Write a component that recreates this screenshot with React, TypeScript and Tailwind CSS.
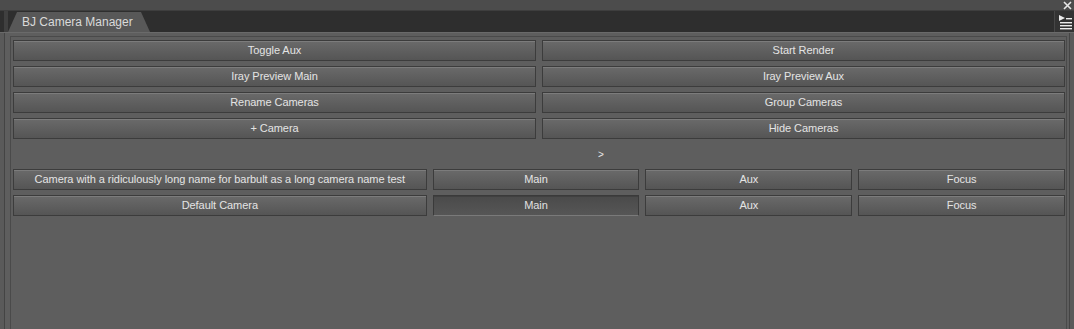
import React from "react";

const font = { fontFamily: '"Liberation Sans", Arial, sans-serif' };

function Btn({ label, pressed = false }: { label: string; pressed?: boolean }) {
  return (
    <div
      className={
        pressed
          ? "flex h-[21px] items-center justify-center border border-[#3a3a3a] border-b-[#7a7a7a] bg-gradient-to-b from-[#4a4a4a] to-[#565656] text-[11px] tracking-[-0.05px] text-[#e0e0e0] shadow-[inset_0_1px_0_#404040]"
          : "flex h-[21px] items-center justify-center border border-[#3c3c3c] bg-gradient-to-b from-[#6a6a6a] to-[#555555] text-[11px] tracking-[-0.05px] text-[#e4e4e4] shadow-[inset_0_1px_0_#7c7c7c]"
      }
    >
      {label}
    </div>
  );
}

export default function App() {
  const top = [
    ["Toggle Aux", "Start Render"],
    ["Iray Preview Main", "Iray Preview Aux"],
    ["Rename Cameras", "Group Cameras"],
    ["+ Camera", "Hide Cameras"],
  ];
  const cams = [
    { name: "Camera with a ridiculously long name for barbult as a long camera name test", pressed: false },
    { name: "Default Camera", pressed: true },
  ];

  return (
    <div className="flex h-[329px] w-[1074px] flex-col overflow-hidden bg-[#4a4a4a]" style={font}>
      {/* top strip */}
      <div className="flex h-[11px] items-center justify-end border-b border-[#3e3e3e] bg-[#4c4c4c] pr-[2px]">
        <svg width="9" height="9" viewBox="0 0 9 9">
          <path d="M1 1 L8 8 M8 1 L1 8" stroke="#e6e6e6" strokeWidth="1.6" />
        </svg>
      </div>

      {/* tab row */}
      <div className="flex h-[21px] items-end bg-[#2e2e2e] pl-[4px]">
        <div className="h-full w-[4px] bg-[#404040]" />
        <div
          className="flex h-[20px] w-[142px] items-center bg-[#585858] pl-[14px] text-[12px] text-[#dadada]"
          style={{ clipPath: "polygon(9px 0, 133px 0, 142px 100%, 0 100%)" }}
        >
          BJ Camera Manager
        </div>
        <div className="flex-1" />
        <div className="flex h-full w-[20px] items-center justify-center border-l border-[#474747] bg-[#333333]">
          <svg width="16" height="16" viewBox="0 0 16 16">
            <polygon points="2,1 8,4 2,7" fill="#ececec" />
            <rect x="9" y="4" width="6" height="1.4" fill="#ececec" />
            <rect x="3" y="8" width="12" height="1.4" fill="#ececec" />
            <rect x="3" y="11" width="12" height="1.4" fill="#ececec" />
            <rect x="3" y="14" width="12" height="1.4" fill="#ececec" />
          </svg>
        </div>
      </div>

      {/* body */}
      <div className="flex flex-1 border-t border-[#6a6a6a] bg-[#5a5a5a] pl-[4px] pr-[4px]">
        <div className="flex flex-1 flex-col border-l border-r border-[#444444] bg-[#5e5e5e] pl-[5px] pr-[2px] pt-[3px]">
          <div className="flex flex-1 flex-col border-l border-t border-r border-[#4a4a4a] pl-[2px] pr-[1px] pt-[3px]">
            <div className="grid grid-cols-2 gap-x-[6px] gap-y-[5px]">
              {top.map(([a, b]) => (
                <React.Fragment key={a}>
                  <Btn label={a} />
                  <Btn label={b} />
                </React.Fragment>
              ))}
            </div>

            <div className="flex h-[30px] items-center justify-center pl-[124px] text-[10px] text-[#e8e8e8]">&gt;</div>

            <div className="grid grid-cols-[2fr_1fr_1fr_1fr] gap-x-[6px] gap-y-[5px]">
              {cams.map((c) => (
                <React.Fragment key={c.name}>
                  <Btn label={c.name} />
                  <Btn label="Main" pressed={c.pressed} />
                  <Btn label="Aux" />
                  <Btn label="Focus" />
                </React.Fragment>
              ))}
            </div>
          </div>
        </div>
      </div>
    </div>
  );
}
